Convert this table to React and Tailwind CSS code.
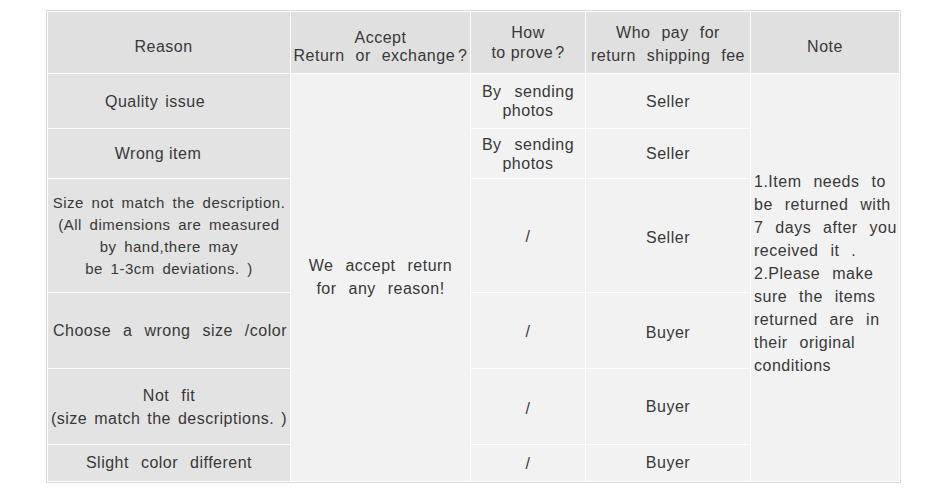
const reasonCell =
  'bg-[#e3e3e3] flex flex-col items-center justify-center text-center';
const dataCell =
  'bg-[#f2f2f2] flex flex-col items-center justify-center text-center';

function App() {
  return (
    <div
      className="w-[950px] h-[493px] bg-white text-[#383838] text-[16px] tracking-[0.5px]"
      style={{ fontFamily: '"Liberation Sans", Arial, sans-serif' }}
    >
      <div className="pt-[10px] pl-[46px]">
        <div className="w-[855px] border border-[#dadada] bg-white p-px">
          <div className="grid grid-cols-[242px_179px_114px_164px_148px] grid-rows-[61px_54px_49px_113px_75px_75px_36px] gap-px bg-white">
            {/* header */}
            <div className="bg-[#e0e0e0] flex items-center justify-center pr-[11px] pt-[8px]">
              Reason
            </div>
            <div className="bg-[#e0e0e0] flex flex-col items-center justify-center text-center leading-[18px] pt-[8px] whitespace-nowrap [word-spacing:6px]">
              <span>Accept</span>
              <span>
                Return or exchange<span className="ml-[3px]">?</span>
              </span>
            </div>
            <div className="bg-[#e0e0e0] flex flex-col items-center justify-center text-center leading-[20px] pt-[1px] whitespace-nowrap">
              <span>How</span>
              <span>
                to prove<span className="ml-[2px]">?</span>
              </span>
            </div>
            <div className="bg-[#e0e0e0] flex flex-col items-center justify-center text-center leading-[23px] pt-[3px] whitespace-nowrap [word-spacing:6px]">
              <span>Who pay for</span>
              <span>return shipping fee</span>
            </div>
            <div className="bg-[#e0e0e0] flex items-center justify-center pt-[8px]">
              Note
            </div>

            {/* row 1 */}
            <div className={`${reasonCell} pr-[28px] pt-[2px] [word-spacing:2px]`}>
              Quality issue
            </div>
            <div
              className={`${dataCell} row-span-6 leading-[23px] pb-[2px] [word-spacing:7px]`}
            >
              <span>We accept return</span>
              <span>for any reason!</span>
            </div>
            <div className={`${dataCell} leading-[19px] pb-[1px]`}>
              <span className="[word-spacing:8px]">By sending</span>
              <span>photos</span>
            </div>
            <div className={`${dataCell} pt-[2px]`}>Seller</div>
            <div className="bg-[#f2f2f2] row-span-6 flex flex-col justify-center pl-[3px] pb-[9px] leading-[23px] whitespace-nowrap [word-spacing:7px]">
              <span>1.Item needs to</span>
              <span>be returned with</span>
              <span>7 days after you</span>
              <span>received it .</span>
              <span>2.Please make</span>
              <span>sure the items</span>
              <span>returned are in</span>
              <span>their original</span>
              <span>conditions</span>
            </div>

            {/* row 2 */}
            <div className={`${reasonCell} pr-[22px] pt-[1px]`}>Wrong item</div>
            <div className={`${dataCell} leading-[19px] pt-[1px]`}>
              <span className="[word-spacing:8px]">By sending</span>
              <span>photos</span>
            </div>
            <div className={`${dataCell} pt-[1px]`}>Seller</div>

            {/* row 3 */}
            <div className={`${reasonCell} text-[15px] leading-[22px] whitespace-nowrap pt-[1px] [word-spacing:3px]`}>
              <span>Size not match the description.</span>
              <span>(All dimensions are measured</span>
              <span>by hand,there may</span>
              <span>be 1-3cm deviations. )</span>
            </div>
            <div className={`${dataCell} pt-[2px]`}>/</div>
            <div className={`${dataCell} pt-[4px]`}>Seller</div>

            {/* row 4 */}
            <div className="bg-[#e3e3e3] flex items-center overflow-hidden whitespace-nowrap pl-[5px] [word-spacing:7px]">
              Choose a wrong size /color
            </div>
            <div className={`${dataCell} pt-[2px]`}>/</div>
            <div className={`${dataCell} pt-[4px]`}>Buyer</div>

            {/* row 5 */}
            <div className={`${reasonCell} leading-[23px] whitespace-nowrap`}>
              <span className="[word-spacing:7px]">Not fit</span>
              <span className="[word-spacing:2px]">(size match the descriptions. )</span>
            </div>
            <div className={`${dataCell} pt-[4px]`}>/</div>
            <div className={`${dataCell} pt-[1px]`}>Buyer</div>

            {/* row 6 */}
            <div className={`${reasonCell} [word-spacing:7px]`}>Slight color different</div>
            <div className={`${dataCell} pt-[2px]`}>/</div>
            <div className={dataCell}>Buyer</div>
          </div>
        </div>
      </div>
    </div>
  );
}

export default App;
